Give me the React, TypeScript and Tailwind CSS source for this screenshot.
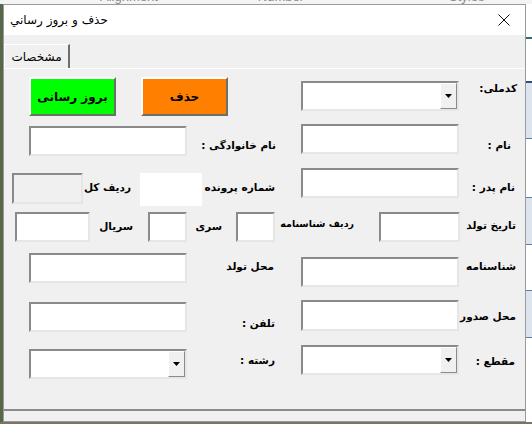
import React from 'react';

const font = { fontFamily: '"DejaVu Sans", "Noto Sans", sans-serif' };

const sunken = 'border-2 border-t-[#8a8a8a] border-l-[#8a8a8a] border-b-[#e6e6e6] border-r-[#e6e6e6] bg-white';

const TextBox = ({ cls }: { cls: string }) => <div className={`${sunken} ${cls} shrink-0`} />;

const Combo = ({ cls }: { cls: string }) => (
  <div className={`${sunken} ${cls} shrink-0 flex justify-end`}>
    <div className="w-[17px] h-full bg-[#f0f0f0] border border-t-white border-l-white border-b-[#8a8a8a] border-r-[#8a8a8a] flex items-center justify-center">
      <svg width="7" height="4" viewBox="0 0 7 4"><path d="M0 0h7L3.5 4z" fill="#000" /></svg>
    </div>
  </div>
);

const Label = ({ text, cls, size = 'text-[10.5px]' }: { text: string; cls: string; size?: string }) => (
  <div dir="rtl" className={`${cls} ${size} shrink-0 text-right leading-[16px] font-bold text-black whitespace-nowrap`} style={font}>
    {text}
  </div>
);

const App: React.FC = () => {
  return (
    <div className="w-[532px] h-[424px] overflow-hidden bg-[#7a7560] flex flex-col">
      {/* excel ribbon edge */}
      <div className="h-[4px] bg-[#f4f4f4] overflow-hidden flex text-[13px] text-[#8a8a8a] leading-[16px]" style={{ fontFamily: '"Liberation Sans", sans-serif' }}>
        <span className="ml-[100px] -mt-[11px]">Alignment</span>
        <span className="ml-[100px] -mt-[11px]">Number</span>
        <span className="ml-[145px] -mt-[11px]">Styles</span>
      </div>
      <div className="flex h-[418px]">
        <div className="w-[3px] bg-[#55684a]" />
        {/* window */}
        <div className="w-[523px] h-[418px] border border-[#9a9a9a] bg-[#f0f0f0] flex flex-col">
          <div className="h-[30px] bg-white flex items-center justify-between pl-[6px] pr-[15px]">
            <span className="text-[12px] text-black" style={font}>حذف و بروز رساني</span>
            <svg width="12" height="12" viewBox="0 0 12 12"><path d="M0.5 0.5l11 11M11.5 0.5l-11 11" stroke="#111" strokeWidth="1" /></svg>
          </div>
          <div className="h-[9px]" />
          <div className="flex h-[24px]">
            <div className="w-[66px] h-[24px] border-t border-l border-t-white border-l-white border-r-2 border-r-[#6e6e6e] flex items-center justify-center text-[12px] text-black" style={font}>
              مشخصات
            </div>
          </div>
          <div className="h-[343px] border-t border-t-white border-b-2 border-b-[#8a8a8a] flex flex-col">
            {/* row A */}
            <div className="flex items-start mt-[8px] h-[39px]">
              <button className="ml-[25px] w-[87px] h-[39px] shrink-0 bg-[#00ff00] border-2 border-t-white border-l-white border-b-[#6e6e6e] border-r-[#6e6e6e] text-[12px] font-bold text-black" style={font}>بروز رسانی</button>
              <button className="ml-[25px] w-[87px] h-[39px] shrink-0 bg-[#ff8000] border-2 border-t-white border-l-white border-b-[#6e6e6e] border-r-[#6e6e6e] text-[12px] font-bold text-black" style={font}>حذف</button>
              <Combo cls="ml-[73px] mt-[4px] w-[158px] h-[30px]" />
              <Label text="کدملی:" cls="w-[58px] mt-[3px]" />
            </div>
            {/* row B */}
            <div className="flex items-start mt-[8px] h-[32px]">
              <TextBox cls="ml-[25px] mt-[2px] w-[158px] h-[30px]" />
              <Label text="نام خانوادگی :" cls="w-[89px] mt-[13px]" />
              <TextBox cls="ml-[25px] w-[158px] h-[30px]" />
              <Label text="نام :" cls="w-[52px] mt-[13px]" />
            </div>
            {/* row C */}
            <div className="flex items-start mt-[12px] h-[38px]">
              <div className="ml-[8px] mt-[5px] w-[71px] h-[31px] shrink-0 border-2 border-t-[#8a8a8a] border-l-[#8a8a8a] border-b-[#e6e6e6] border-r-[#e6e6e6] bg-[#f0f0f0]" />
              <Label text="ردیف کل" cls="w-[48px] mt-[11px]" />
              <div className="ml-[9px] mt-[5px] w-[62px] h-[33px] shrink-0 bg-white" />
              <Label text="شماره پرونده" cls="w-[73px] mt-[11px]" />
              <TextBox cls="ml-[26px] w-[158px] h-[30px]" />
              <Label text="نام پدر :" cls="w-[56px] mt-[11px]" />
            </div>
            {/* row D */}
            <div className="flex items-start mt-[6px] h-[30px]">
              <TextBox cls="ml-[11px] w-[75px] h-[30px]" />
              <Label text="سریال" cls="w-[43px] mt-[6px]" />
              <TextBox cls="ml-[15px] w-[39px] h-[30px]" />
              <Label text="سری" cls="w-[35px] mt-[6px]" />
              <TextBox cls="ml-[14px] w-[39px] h-[30px]" />
              <Label text="ردیف شناسنامه" cls="w-[79px] mt-[4px]" size="text-[9.5px]" />
              <TextBox cls="ml-[25px] w-[81px] h-[30px]" />
              <Label text="تاریخ تولد" cls="w-[56px] mt-[5px]" />
            </div>
            {/* row E */}
            <div className="flex items-start mt-[11px] h-[34px]">
              <TextBox cls="ml-[25px] w-[158px] h-[30px]" />
              <Label text="محل تولد" cls="w-[87px] mt-[5px]" />
              <TextBox cls="ml-[27px] mt-[4px] w-[158px] h-[30px]" />
              <Label text="شناسنامه" cls="w-[57px] mt-[5px]" />
            </div>
            {/* row F */}
            <div className="flex items-start mt-[13px] h-[32px]">
              <TextBox cls="ml-[25px] mt-[2px] w-[158px] h-[30px]" />
              <Label text="تلفن :" cls="w-[88px] mt-[15px]" />
              <TextBox cls="ml-[26px] w-[158px] h-[31px]" />
              <Label text="محل صدور" cls="w-[57px] mt-[8px]" />
            </div>
            {/* row G */}
            <div className="flex items-start mt-[13px] h-[34px]">
              <Combo cls="ml-[25px] mt-[4px] w-[158px] h-[30px]" />
              <Label text="رشته :" cls="w-[88px] mt-[7px]" />
              <Combo cls="ml-[26px] w-[158px] h-[30px]" />
              <Label text="مقطع :" cls="w-[56px] mt-[8px]" />
            </div>
          </div>
        </div>
        {/* excel cells at right */}
        <div className="flex-1 bg-[#dde4ee] flex flex-col">
          <div className="h-[33px] bg-white" />
          <div className="h-[2px] bg-[#2f6f6f]" />
          <div className="h-[42px] bg-white" />
          <div className="h-[2px] bg-[#2b4f7a]" />
          <div className="h-[55px]" />
          <div className="h-[1px] bg-[#5b7fa8]" />
          <div className="h-[58px] bg-white" />
          <div className="h-[1px] bg-[#5b7fa8]" />
          <div className="h-[46px]" />
          <div className="h-[1px] bg-[#5b7fa8]" />
          <div className="h-[45px] bg-white" />
          <div className="h-[1px] bg-[#5b7fa8]" />
          <div className="h-[46px]" />
          <div className="h-[1px] bg-[#5b7fa8]" />
          <div className="flex-1 bg-white" />
        </div>
      </div>
    </div>
  );
};

export default App;
